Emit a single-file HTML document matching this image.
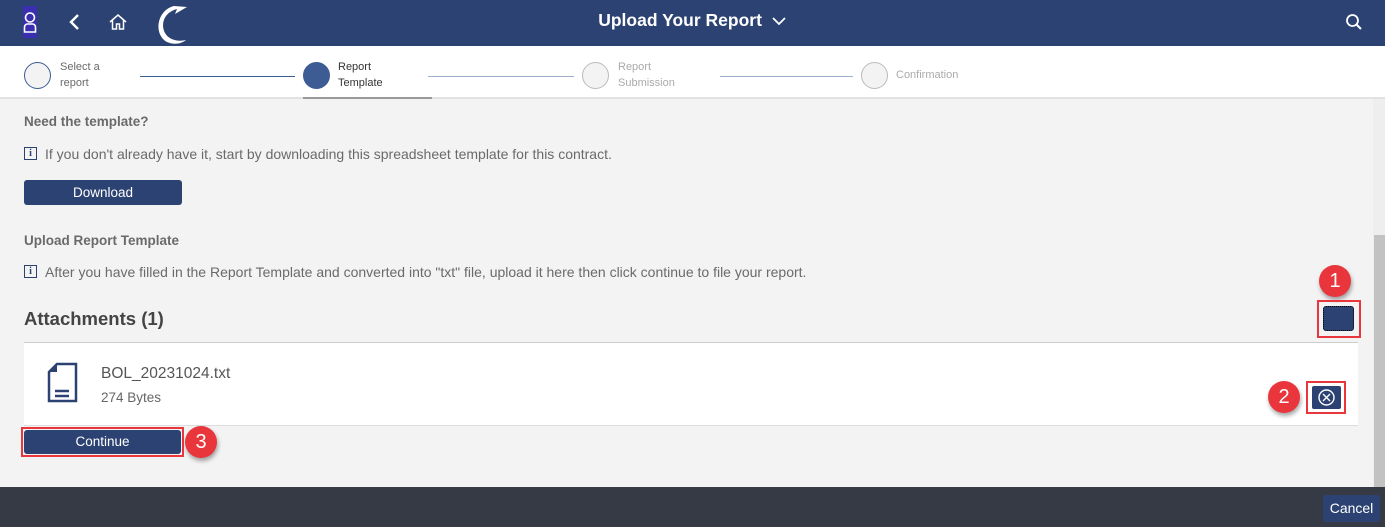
<!DOCTYPE html>
<html><head><meta charset="utf-8"><style>
*{box-sizing:border-box;margin:0;padding:0}
body{width:1385px;height:527px;overflow:hidden;background:#f3f3f3;font-family:"Liberation Sans",Arial,sans-serif;position:relative}
.a{position:absolute}
.hdr{left:0;top:0;width:1385px;height:46px;background:#2c4272}
.steps{left:0;top:46px;width:1385px;height:53px;background:#fff;border-bottom:2px solid #e2e2e2}
.circ{width:27px;height:27px;border-radius:50%;border:1px solid #3d5c94;background:#f3f3f3}
.lbl{font-size:11px;line-height:16px;color:#6a6a6a}
.line{height:1px;background:#3d5c94}
.h{font-size:13.5px;font-weight:bold;color:#6a6a6a}
.t{font-size:14px;color:#6a6a6a}
.info{width:13px;height:13px;border:1px solid #2c4272;font:bold 10px/11px "Liberation Serif",serif;color:#2c4272;text-align:center}
.btn{background:#2c4272;color:#fff;font-size:13.5px;text-align:center;border-radius:3px}
.badge{width:32px;height:32px;border-radius:50%;background:#e8363c;color:#fff;font-size:20px;text-align:center;line-height:32px;box-shadow:1px 3px 4px rgba(0,0,0,.35)}
.red{border:2px solid #e8363c}
</style></head><body>
<div class="a hdr"></div>
<div class="a" style="left:23px;top:6px;width:14px;height:32px;background:#3a2fb0"></div>
<svg class="a" style="left:23px;top:12px" width="14" height="22" viewBox="0 0 14 22"><circle cx="7" cy="5.5" r="4.5" fill="none" stroke="#fff" stroke-width="1.6"/><path d="M1.5 20V15a3 3 0 0 1 3-3h5a3 3 0 0 1 3 3v5z" fill="none" stroke="#fff" stroke-width="1.6"/></svg>
<svg class="a" style="left:68px;top:13px" width="12" height="18"><path d="M10 2L3 9l7 7" fill="none" stroke="#fff" stroke-width="2.4"/></svg>
<svg class="a" style="left:108px;top:13px" width="20" height="18"><path d="M2 9L10 2l8 7M4.5 7.5V16h4v-5h3v5h4V7.5" fill="none" stroke="#fff" stroke-width="1.5"/></svg>
<svg class="a" style="left:150px;top:1px" width="40" height="44" viewBox="0 0 40 44"><path d="M24 5C7 9 3 33 17 41c7 3 14 2 19-2c-8 2-17 0-21-7C10 22 15 11 27 8l-2 5l12-7z" fill="#fff"/></svg>
<div class="a" style="left:0;width:1385px;top:10px;text-align:center;color:#fff;font-size:17.5px;font-weight:bold">Upload Your Report <svg width="16" height="10" style="margin-left:4px"><path d="M2 2l6 6 6-6" fill="none" stroke="#fff" stroke-width="1.8"/></svg></div>
<svg class="a" style="left:1345px;top:13px" width="18" height="18"><circle cx="7.5" cy="7.5" r="5.5" fill="none" stroke="#fff" stroke-width="1.8"/><path d="M11.5 11.5L16 16" stroke="#fff" stroke-width="2"/></svg>

<div class="a steps"></div>
<div class="a circ" style="left:24px;top:62px"></div>
<div class="a lbl" style="left:60px;top:59px">Select a<br>report</div>
<div class="a line" style="left:140px;top:76px;width:155px"></div>
<div class="a circ" style="left:303px;top:62px;background:#3d5c94"></div>
<div class="a lbl" style="left:338px;top:59px;color:#333">Report<br>Template</div>
<div class="a" style="left:303px;top:97px;width:129px;height:2px;background:#999"></div>
<div class="a line" style="left:428px;top:76px;width:146px;background:#9db0d0"></div>
<div class="a circ" style="left:582px;top:62px;border-color:#bbb"></div>
<div class="a lbl" style="left:618px;top:59px;color:#aaa">Report<br>Submission</div>
<div class="a line" style="left:720px;top:76px;width:133px;background:#9db0d0"></div>
<div class="a circ" style="left:861px;top:62px;border-color:#bbb"></div>
<div class="a lbl" style="left:896px;top:67px;color:#aaa">Confirmation</div>

<div class="a h" style="left:24px;top:114px">Need the template?</div>
<div class="a info" style="left:24px;top:147px">i</div>
<div class="a t" style="left:45px;top:146px">If you don't already have it, start by downloading this spreadsheet template for this contract.</div>
<div class="a btn" style="left:24px;top:180px;width:158px;height:25px;line-height:25px">Download</div>
<div class="a h" style="left:24px;top:233px">Upload Report Template</div>
<div class="a info" style="left:24px;top:265px">i</div>
<div class="a t" style="left:45px;top:264px">After you have filled in the Report Template and converted into "txt" file, upload it here then click continue to file your report.</div>
<div class="a" style="left:24px;top:308px;font-size:18.5px;font-weight:bold;color:#444">Attachments (1)</div>

<div class="a badge" style="left:1319px;top:265px">1</div>
<div class="a red" style="left:1317px;top:300px;width:44px;height:38px"></div>
<div class="a" style="left:1323px;top:306px;width:31px;height:25px;background:#2c4272;border-radius:3px;border:1px dotted #000"></div>

<div class="a" style="left:24px;top:342px;width:1334px;height:84px;background:#fff;border-top:1px solid #ccc;border-bottom:1px solid #ddd"></div>
<svg class="a" style="left:47px;top:362px" width="32" height="42"><path d="M10 2h19v37H2V10z" fill="none" stroke="#2c4272" stroke-width="2.5"/><path d="M10 2v8H2z" fill="#2c4272"/><path d="M8 29h14M8 34h14" stroke="#2c4272" stroke-width="2.5"/></svg>
<div class="a" style="left:101px;top:365px;font-size:15.5px;color:#555">BOL_20231024.txt</div>
<div class="a" style="left:101px;top:390px;font-size:13.5px;color:#666">274 Bytes</div>
<div class="a badge" style="left:1268px;top:381px">2</div>
<div class="a red" style="left:1306px;top:381px;width:40px;height:33px"></div>
<div class="a" style="left:1312px;top:386px;width:29px;height:23px;background:#2c4272;border-radius:2px"></div>
<svg class="a" style="left:1317px;top:388px" width="19" height="19"><circle cx="9.5" cy="9.5" r="7.5" fill="none" stroke="#fff" stroke-width="1.4"/><path d="M6 6l7 7M13 6l-7 7" stroke="#fff" stroke-width="1.4"/></svg>

<div class="a red" style="left:21px;top:427px;width:163px;height:30px"></div>
<div class="a btn" style="left:24px;top:430px;width:157px;height:24px;line-height:24px">Continue</div>
<div class="a badge" style="left:185px;top:426px">3</div>

<div class="a" style="left:1373px;top:99px;width:12px;height:388px;background:#eee"></div>
<div class="a" style="left:1374px;top:235px;width:11px;height:252px;background:#c2c2c2"></div>
<div class="a" style="left:0;top:487px;width:1385px;height:40px;background:#353a45"></div>
<div class="a btn" style="left:1323px;top:495px;width:57px;height:27px;line-height:27px;font-size:14px">Cancel</div>
</body></html>
